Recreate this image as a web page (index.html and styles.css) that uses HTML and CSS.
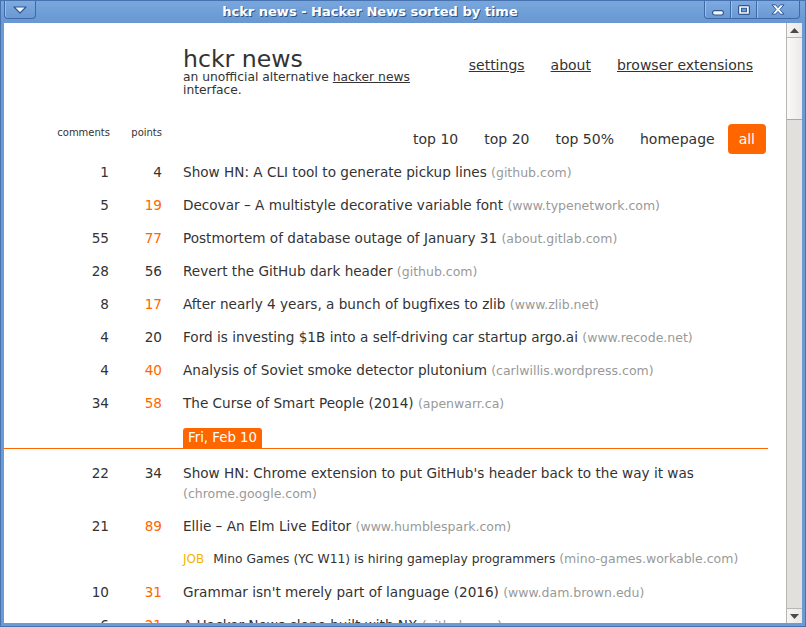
FILE: index.html
```html
<!DOCTYPE html>
<html>
<head>
<meta charset="utf-8">
<title>hckr news - Hacker News sorted by time</title>
<link rel="stylesheet" href="styles.css">
</head>
<body>
<div class="win">
  <div class="titlebar">
    <div class="tb-btn tb-menu">
      <svg width="14" height="8" viewBox="0 0 14 8"><path d="M1 1 H13 L7 7 Z" fill="#f4f7fc" stroke="#2f5894" stroke-width="1.2" stroke-linejoin="round"/></svg>
    </div>
    <div class="tb-title">hckr news - Hacker News sorted by time</div>
    <div class="tb-group">
      <div class="tb-btn tb-min">
        <svg width="12" height="6" viewBox="0 0 12 6"><rect x="0.6" y="0.6" width="10.8" height="4.4" rx="2" fill="#f4f7fc" stroke="#2f5894" stroke-width="1.2"/></svg>
      </div>
      <div class="tb-btn tb-max">
        <svg width="12" height="10" viewBox="0 0 12 10"><rect x="0.6" y="0.6" width="10.8" height="8.8" rx="1" fill="#f4f7fc" stroke="#2f5894" stroke-width="1.2"/><rect x="3.5" y="3.3" width="5" height="3.4" fill="#6d9ad2" stroke="#2f5894" stroke-width="1"/></svg>
      </div>
      <div class="tb-btn tb-close">
        <svg width="14" height="11" viewBox="0 0 14 11"><path d="M1 0.8 H4.6 L7 3.6 L9.4 0.8 H13 L9 5.5 L13 10.2 H9.4 L7 7.4 L4.6 10.2 H1 L5 5.5 Z" fill="#f4f7fc" stroke="#2f5894" stroke-width="1" stroke-linejoin="round"/></svg>
      </div>
    </div>
  </div>
  <div class="frame">
    <div class="viewport">
      <div class="page">
        <div class="header">
          <div class="brand">
            <div class="brand-name">hckr news</div>
            <div class="brand-sub">an unofficial alternative <a href="#">hacker news</a> interface.</div>
          </div>
          <nav class="nav">
            <a href="#">settings</a>
            <a href="#">about</a>
            <a href="#">browser extensions</a>
          </nav>
        </div>

        <div class="filterbar">
          <div class="labels">
            <span>comments</span>
            <span>points</span>
          </div>
          <div class="tabs">
            <span class="tab">top 10</span>
            <span class="tab">top 20</span>
            <span class="tab">top 50%</span>
            <span class="tab">homepage</span>
            <span class="tab active">all</span>
          </div>
        </div>

        <div class="row"><span class="num">1</span><span class="num">4</span><span class="title">Show HN: A CLI tool to generate pickup lines <span class="dom">(github.com)</span></span></div>
        <div class="row"><span class="num">5</span><span class="num hot">19</span><span class="title">Decovar – A multistyle decorative variable font <span class="dom">(www.typenetwork.com)</span></span></div>
        <div class="row"><span class="num">55</span><span class="num hot">77</span><span class="title">Postmortem of database outage of January 31 <span class="dom">(about.gitlab.com)</span></span></div>
        <div class="row"><span class="num">28</span><span class="num">56</span><span class="title">Revert the GitHub dark header <span class="dom">(github.com)</span></span></div>
        <div class="row"><span class="num">8</span><span class="num hot">17</span><span class="title">After nearly 4 years, a bunch of bugfixes to zlib <span class="dom">(www.zlib.net)</span></span></div>
        <div class="row"><span class="num">4</span><span class="num">20</span><span class="title">Ford is investing $1B into a self-driving car startup argo.ai <span class="dom">(www.recode.net)</span></span></div>
        <div class="row"><span class="num">4</span><span class="num hot">40</span><span class="title">Analysis of Soviet smoke detector plutonium <span class="dom">(carlwillis.wordpress.com)</span></span></div>
        <div class="row"><span class="num">34</span><span class="num hot">58</span><span class="title">The Curse of Smart People (2014) <span class="dom">(apenwarr.ca)</span></span></div>

        <div class="daysep"><span class="day">Fri, Feb 10</span></div>

        <div class="row"><span class="num">22</span><span class="num">34</span><span class="title">Show HN: Chrome extension to put GitHub's header back to the way it was <span class="dom">(chrome.google.com)</span></span></div>
        <div class="row"><span class="num">21</span><span class="num hot">89</span><span class="title">Ellie – An Elm Live Editor <span class="dom">(www.humblespark.com)</span></span></div>
        <div class="row job"><span class="num"></span><span class="num"></span><span class="title"><span class="jobtag">JOB</span>Mino Games (YC W11) is hiring gameplay programmers <span class="dom">(mino-games.workable.com)</span></span></div>
        <div class="row"><span class="num">10</span><span class="num hot">31</span><span class="title">Grammar isn't merely part of language (2016) <span class="dom">(www.dam.brown.edu)</span></span></div>
        <div class="row"><span class="num">6</span><span class="num hot">21</span><span class="title">A Hacker News clone built with NX <span class="dom">(github.com)</span></span></div>
      </div>
    </div>
    <div class="scrollbar">
      <div class="sb-btn">
        <svg width="9" height="5" viewBox="0 0 9 5"><path d="M0 5 L4.5 0 L9 5 Z" fill="#4a4a4a"/></svg>
      </div>
      <div class="sb-thumb"></div>
      <div class="sb-track"></div>
      <div class="sb-btn">
        <svg width="9" height="5" viewBox="0 0 9 5"><path d="M0 0 L4.5 5 L9 0 Z" fill="#4a4a4a"/></svg>
      </div>
    </div>
  </div>
</div>
</body>
</html>
```

FILE: styles.css
```css
* { box-sizing: border-box; margin: 0; padding: 0; }
html, body { width: 806px; height: 627px; overflow: hidden; }
body { font-family: "DejaVu Sans", sans-serif; color: #333; background: #6b9ad3; }
a { color: #333; }

.win {
  width: 806px; height: 627px;
  display: flex; flex-direction: column;
  background: #6c9bd3;
  border: 1px solid #4672b0;
}

/* title bar */
.titlebar {
  height: 22px; flex: none;
  display: flex; align-items: flex-start;
  padding: 0 3px;
  background: linear-gradient(#78a6dc, #6897d1);
}
.tb-btn {
  height: 18px;
  display: flex; align-items: center; justify-content: center;
  border: 1px solid #3d69a6; border-top: none;
  background: linear-gradient(#7eaae0, #6a98d2);
  box-shadow: inset 1px 0 0 #9cc0ea;
}
.tb-menu { width: 32px; border-radius: 0 0 4px 4px; }
.tb-title {
  flex: 1; text-align: center;
  font: bold 13px/21px "DejaVu Sans", sans-serif;
  color: #fff;
  text-shadow: 1px 1px 0 #2d5488;
}
.tb-group { display: flex; margin-right: 2px; }
.tb-group .tb-btn { border-right: none; }
.tb-group .tb-btn:last-child { border-right: 1px solid #3d69a6; border-radius: 0 0 4px 0; }
.tb-min { width: 26px; border-radius: 0 0 0 4px; padding-top: 6px; }
.tb-max { width: 26px; }
.tb-close { width: 44px; }

/* frame */
.frame { flex: 1; min-height: 0; display: flex; margin: 0 3px 3px 3px; }
.viewport { flex: 1; background: #fff; overflow: hidden; }
.scrollbar {
  width: 16px; flex: none;
  display: flex; flex-direction: column;
  background: #dedcd8;
  border-left: 1px solid #b8b6b1;
}
.sb-btn {
  height: 15px; flex: none;
  display: flex; align-items: center; justify-content: center;
  background: linear-gradient(90deg, #f6f5f3, #e9e8e5);
  border-bottom: 1px solid #b8b6b1;
}
.sb-btn:last-child { border-bottom: none; border-top: 1px solid #b8b6b1; }
.sb-thumb {
  height: 82px; flex: none;
  background: linear-gradient(90deg, #f9f9f8, #ebeae7);
  border-bottom: 1px solid #a9a7a2;
}
.sb-track { flex: 1; background: #e2e0dc; }

/* page */
.page { width: 764px; }

.header { display: flex; padding: 24px 15px 0 179px; }
.brand { width: 236px; }
.brand-name { font-size: 23.6px; line-height: 24px; color: #333; }
.brand-sub { font-size: 12.3px; line-height: 13px; color: #333; }
.nav { margin-left: auto; padding-top: 8px; display: flex; gap: 26px; font-size: 14px; line-height: 20px; }

.filterbar { display: flex; margin: 27px 2px 2px 0; height: 30px; }
.labels {
  display: grid; grid-template-columns: 106px 52px;
  font-size: 10px; line-height: 12px; padding-top: 3px;
  text-align: right;
}
.tabs { margin-left: auto; display: flex; font-size: 14px; line-height: 30px; }
.tab { padding: 0 13px; color: #333; }
.tab.active { background: #ff6600; color: #fff; border-radius: 4px; padding: 0 11px; }

.row {
  display: grid; grid-template-columns: 105px 53px 1fr;
  font-size: 13.6px; line-height: 20px;
  padding: 6px 0 7px;
}
.num { text-align: right; color: #333; }
.num.hot { color: #ff6600; }
.title { padding-left: 21px; color: #333; }
.dom { font-size: 12.5px; line-height: 1; color: #999; }
.row.job .title { font-size: 12.3px; }
.jobtag { color: #f5b400; margin-right: 9px; font-size: 12px; line-height: 1; }

.daysep { margin: 8px 0 8px; height: 21px; border-bottom: 1px solid #ff6600; padding-left: 179px; }
.day {
  display: inline-block; height: 20px; padding: 0 5px;
  background: #ff6600; color: #fff;
  font-size: 13.3px; line-height: 20px;
  border-radius: 3px 3px 0 0;
  vertical-align: top;
}
```
